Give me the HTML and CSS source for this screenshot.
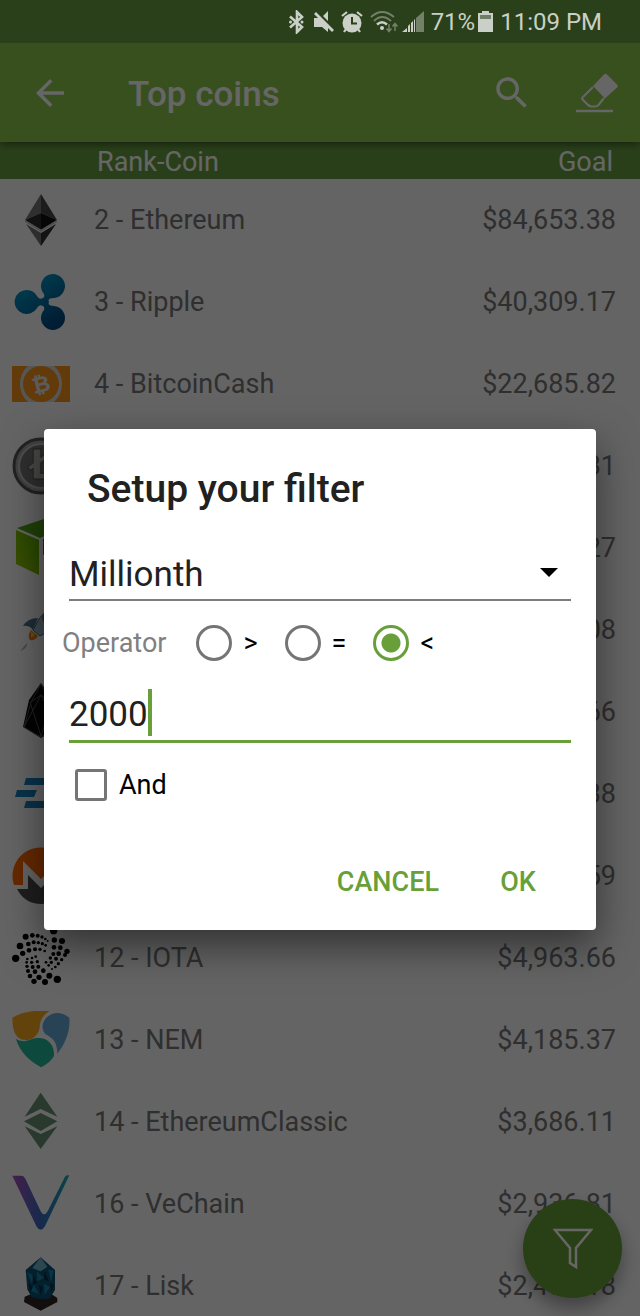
FILE: index.html
```html
<!DOCTYPE html>
<html lang="en">
<head>
  <meta charset="UTF-8">
  <meta name="viewport" content="width=device-width, initial-scale=1.0">
  <title>Top coins</title>
  <link rel="stylesheet" href="styles.css">
</head>
<body>
  <div class="app">
    <div class="status-bar">
      <svg width="18" height="24" viewBox="0 0 18 24"><path d="M1 6.500 13 17 8 22V2l5 5L1 17.500" fill="none" stroke="currentColor" stroke-width="2.600"/><circle cx="1.500" cy="12" r="1.500" fill="currentColor"/><circle cx="13" cy="12" r="1.500" fill="currentColor"/></svg>
      <svg width="20" height="24" viewBox="0 0 20 24"><path d="M0 8h7l7 7v7l-6-5H0zM14 1v10L9 6z" fill="currentColor"/><path d="M1 3l18 18" stroke="currentColor" stroke-width="2.800"/></svg>
      <svg width="22" height="24" viewBox="0 0 22 24"><path d="M1 6l5-4M21 6l-5-4M5 19l-2 3M17 19l2 3" stroke="currentColor" stroke-width="2.200"/><circle cx="11" cy="13" r="9.500" fill="currentColor"/><path d="M11 7v6.500h5" fill="none" stroke="#2a401a" stroke-width="2"/></svg>
      <svg width="54" height="24" viewBox="0 0 54 24">
        <g fill="none" stroke="currentColor" stroke-width="2">
          <path d="M1 7Q12-3 24 7M4 11Q12 3 21 11" opacity=".45"/>
          <path d="M7 14.500Q12 10 17 14.500" stroke-width="2.500"/>
          <path d="M19 14v7M16.500 18.500l2.500 3 2.500-3M25 21v-7M22.500 16.500l2.500-3 2.500 3" opacity=".45" stroke-width="1.500"/>
        </g>
        <circle cx="12" cy="18" r="2" fill="currentColor"/>
        <path d="M32 22l5-4v4zM38 22v-6l2-2v8zM41 22v-9l2-2v11zM44 22V10l1-1v13z" fill="currentColor"/>
        <path d="M46 22V8l8-7v21z" fill="currentColor" opacity=".45"/>
      </svg>
      <span class="battery">71%
        <svg width="15" height="24" viewBox="0 0 15 24"><path d="M0 3h4V1h7v2h4v19H0z" fill="currentColor"/><path d="M2 5h11v4H2z" fill="#6f7f67"/></svg>
      </span>
      <span>11:09 PM</span>
    </div>

    <header class="app-bar">
      <button class="icon-button" aria-label="Back">
        <svg width="42" height="42" viewBox="0 0 24 24"><path d="M20 11H7.830l5.590-5.590L12 4l-8 8 8 8 1.410-1.410L7.830 13H20v-2z" fill="currentColor"/></svg>
      </button>
      <h1>Top coins</h1>
      <button class="icon-button" aria-label="Search">
        <svg width="42" height="42" viewBox="0 0 24 24"><path d="M15.500 14h-.79l-.28-.27C15.410 12.590 16 11.110 16 9.500 16 5.910 13.090 3 9.500 3S3 5.910 3 9.500 5.910 16 9.500 16c1.610 0 3.090-.59 4.230-1.570l.27.28v.79l5 4.990L20.490 19l-4.990-5zm-6 0C7.010 14 5 11.990 5 9.500S7.010 5 9.500 5 14 7.010 14 9.500 11.990 14 9.500 14z" fill="currentColor"/></svg>
      </button>
      <button class="icon-button" aria-label="Clear filter">
        <svg width="42" height="42" viewBox="0 0 42 42"><path d="M17 15 6.500 25.500q-1 1 0 2L12 33q2 1.500 4 1.500h3q2 0 3.500-1.500l5.500-7" fill="none" stroke="currentColor" stroke-width="2.200"/><path d="M17 14 28 2.500q1.500-1.500 3 0L41 12.500q1.500 1.500 0 3L29 26.500z" fill="currentColor"/><path d="M0 39h37" stroke="currentColor" stroke-width="2.500"/></svg>
      </button>
    </header>

    <table class="coins">
      <thead>
        <tr><th colspan="2" class="coin-head">Rank-Coin</th><th class="goal-head">Goal</th></tr>
      </thead>
      <tbody>
        <tr>
          <td class="logo"><svg viewBox="0 0 58 58"><path d="M29 3 13 29l16-7z" fill="#757575"/><path d="M29 3l16 26-16-7z" fill="#464646"/><path d="M13 29l16-7v17z" fill="#2c2c2c"/><path d="M45 29l-16-7v17z" fill="#101010"/><path d="M13 29l16 9.500L45 29v2l-16 10L13 31z" fill="#c0c0c0"/><path d="M14 33l15 9v13z" fill="#727272"/><path d="M44 33l-15 9v13z" fill="#303030"/></svg></td>
          <td>2 - Ethereum</td><td class="goal">$84,653.38</td>
        </tr>
        <tr>
          <td class="logo"><svg viewBox="0 0 58 58"><defs><linearGradient id="ripple" x1="0" y1="0" x2="0.600" y2="1"><stop offset="0.100" stop-color="#00a2d0"/><stop offset="1" stop-color="#00497f"/></linearGradient></defs><path d="M15 17a12 12 0 0 1 10 6q2 4 6 2 2-1 1-4a12 12 0 1 1 10 4q-7 0-5 4-2 4 5 4a12 12 0 1 1-10 4q1-3-1-4-4-2-6 2a12 12 0 1 1-10-18z" fill="url(#ripple)"/></svg></td>
          <td>3 - Ripple</td><td class="goal">$40,309.17</td>
        </tr>
        <tr>
          <td class="logo"><svg viewBox="0 0 58 58"><path d="M0 11h58v36H0z" fill="#f7931a"/><path d="M16 11h26q8 7 8 18t-8 18H16q-8-7-8-18t8-18z" fill="#d8d8d8"/><circle cx="29" cy="29" r="18" fill="#f7931a"/><text x="29" y="37" class="bitcoin-sign" transform="rotate(-14 29 29)">₿</text></svg></td>
          <td>4 - BitcoinCash</td><td class="goal">$22,685.82</td>
        </tr>
        <tr>
          <td class="logo"><svg viewBox="0 0 58 58"><circle cx="29" cy="29" r="27" fill="#a2a2a2" stroke="#555" stroke-width="3"/><circle cx="29" cy="29" r="22" fill="#777" stroke="#c4c4c4" stroke-width="2"/><text x="30" y="42" class="litecoin-sign">Ł</text></svg></td>
          <td>6 - Litecoin</td><td class="goal">$17,402.31</td>
        </tr>
        <tr>
          <td class="logo"><svg viewBox="0 0 58 58"><defs><linearGradient id="neo" x1="1" y1="0" x2="0" y2="1"><stop offset="0" stop-color="#58b400"/><stop offset="1" stop-color="#9bc600"/></linearGradient></defs><path d="M4 11l23 10v35L4 45z" fill="url(#neo)"/><path d="M5 9 32 0l21 8-25 11z" fill="#4ca616"/><path d="M31 20l23-10v17l-23 9z" fill="#388712"/></svg></td>
          <td>7 - NEO</td><td class="goal">$12,968.27</td>
        </tr>
        <tr>
          <td class="logo"><svg viewBox="0 0 58 58"><path d="M11 25q5-8 15-8l-5 12q-4-5-10-4z" fill="#526f86"/><path d="M52 2Q32 4 21 29l7 6Q50 25 52 2z" fill="#9dbccb" stroke="#49667b"/><circle cx="35" cy="17" r="5" fill="#55758b"/><path d="M19 29l7 6q-3 5-8 4-3-4 1-10z" fill="#ef7e18"/><path d="M19 30l4 4-4 3z" fill="#ffc237"/><path d="M8 50l7-8q1 5-7 8z" fill="#b3b3b3"/></svg></td>
          <td>8 - Stellar</td><td class="goal">$10,726.08</td>
        </tr>
        <tr>
          <td class="logo"><svg viewBox="0 0 58 58"><path d="M29 0l12 17 6 27-18 11-18-11 6-27z" fill="#090909"/><path d="M29 1 19 19l10-7 10 7zM19 19l-7 25 17 10 17-10-7-25M12 44l17-32 17 32M18 19l11 34 11-34" fill="none" stroke="#555"/></svg></td>
          <td>9 - EOS</td><td class="goal">$8,314.66</td>
        </tr>
        <tr>
          <td class="logo"><svg viewBox="0 0 58 58"><path d="M14 13h33q10 1 8 9l-4 15q-2 6-9 6H12l2-7h29l4-16H12z" fill="#1681bc"/><path d="M5 25h20l-3 7H3z" fill="#1681bc"/></svg></td>
          <td>10 - Dash</td><td class="goal">$7,015.38</td>
        </tr>
        <tr>
          <td class="logo"><svg viewBox="0 0 58 58"><path d="M2 38A28.500 28.500 0 1 1 56 38H47V14L29 32 11 14v24z" fill="#ff6600"/><path d="M5 42h11V28l13 13 13-13v14h11Q45 57 29 57T5 42z" fill="#4c4c4c"/></svg></td>
          <td>11 - Monero</td><td class="goal">$5,847.59</td>
        </tr>
        <tr>
          <td class="logo">
            <svg viewBox="36 27 174 174">
              <circle cx="47" cy="115" r="11"/><circle cx="60" cy="78" r="10"/><circle cx="77" cy="50" r="9"/><circle cx="97" cy="46" r="7"/><circle cx="113" cy="47" r="6"/><circle cx="126" cy="51" r="5"/><circle cx="136" cy="57" r="4"/><circle cx="143" cy="63" r="3"/>
              <circle cx="68" cy="100" r="8"/><circle cx="85" cy="72" r="7"/><circle cx="101" cy="67" r="6"/><circle cx="115" cy="68" r="5"/><circle cx="127" cy="71" r="5"/><circle cx="137" cy="76" r="4"/>
              <circle cx="87" cy="91" r="7"/><circle cx="105" cy="88" r="6"/><circle cx="120" cy="88" r="5"/><circle cx="134" cy="93" r="4"/>
              <circle cx="161" cy="32" r="11"/><circle cx="186" cy="63" r="9"/><circle cx="201" cy="94" r="8"/><circle cx="163" cy="60" r="8"/><circle cx="181" cy="83" r="7"/><circle cx="195" cy="105" r="6"/>
              <circle cx="162" cy="82" r="7"/><circle cx="176" cy="101" r="7"/><circle cx="185" cy="119" r="5"/><circle cx="160" cy="102" r="6"/><circle cx="168" cy="116" r="6"/><circle cx="175" cy="131" r="5"/><circle cx="151" cy="114" r="5"/><circle cx="154" cy="127" r="5"/><circle cx="138" cy="127" r="4"/><circle cx="166" cy="141" r="4"/><circle cx="146" cy="136" r="4"/><circle cx="156" cy="147" r="3"/>
              <circle cx="172" cy="178" r="11"/><circle cx="148" cy="167" r="9"/><circle cx="130" cy="152" r="7"/><circle cx="115" cy="140" r="6"/><circle cx="112" cy="125" r="5"/><circle cx="107" cy="110" r="4"/>
              <circle cx="135" cy="186" r="9"/><circle cx="117" cy="172" r="8"/><circle cx="105" cy="155" r="7"/><circle cx="98" cy="141" r="6"/><circle cx="95" cy="127" r="5"/><circle cx="96" cy="114" r="4"/>
              <circle cx="102" cy="184" r="8"/><circle cx="90" cy="168" r="7"/><circle cx="84" cy="153" r="6"/><circle cx="81" cy="139" r="5"/><circle cx="80" cy="127" r="4"/><circle cx="82" cy="117" r="4"/>
            </svg>
          </td>
          <td>12 - IOTA</td><td class="goal">$4,963.66</td>
        </tr>
        <tr>
          <td class="logo"><svg viewBox="36 270 174 174"><path d="M37 290Q80 265 150 269C125 285 120 300 119 320 115 345 95 357 78 357 50 357 37 335 37 290z" fill="#f7a920"/><path d="M208 290C190 275 165 270 145 285 125 300 122 325 137 340 155 350 172 360 172 398 195 370 212 330 208 290z" fill="#67a8d8"/><path d="M48 354C75 368 85 356 105 352 140 345 165 370 162 405 150 425 135 432 123 439 90 420 60 395 48 354z" fill="#23b79a"/></svg></td>
          <td>13 - NEM</td><td class="goal">$4,185.37</td>
        </tr>
        <tr>
          <td class="logo"><svg viewBox="36 517 174 174"><path d="M122 516 74 588l48-23 50 23zM72 602l50-25 50 25-50 29zM74 617l48 23 50-23-50 68z" fill="#669073"/></svg></td>
          <td>14 - EthereumClassic</td><td class="goal">$3,686.11</td>
        </tr>
        <tr>
          <td class="logo"><svg viewBox="36 71 174 174"><defs><linearGradient id="vechain"><stop offset="0" stop-color="#a950b8"/><stop offset="0.500" stop-color="#3a68c0"/><stop offset="1" stop-color="#18a9be"/></linearGradient></defs><path d="M37 73H64Q72 73 76 82l46 98q10 18 21 0L195 76q3-5 13-4L135 225q-13 20-25 1z" fill="url(#vechain)"/></svg></td>
          <td>16 - VeChain</td><td class="goal">$2,936.81</td>
        </tr>
        <tr>
          <td class="logo"><svg viewBox="36 319 174 174"><path d="M74 438l20-8h60l18 12v12l-50 26-50-26z" fill="#2b2522"/><path d="M122 320l43 38v60l-15 24q-30 8-56-4l-12-22-5-58z" fill="#0b5272"/><path d="M122 320l20 28-20 14-25-10z" fill="#70b2cb"/><path d="M80 364l20 10-4 24zM110 362l22 20-20 10zM145 356l16 4-8 34zM102 402l14 28-24-10zM132 398l18 12-16 22z" fill="#137fa9"/><path d="M98 370l14 26-12 8zM134 362l12 30-14-6zM86 398l12 10-6 16zM150 398l12 4-8 24zM116 402l12 8-6 24z" fill="#062b42"/></svg></td>
          <td>17 - Lisk</td><td class="goal">$2,452.18</td>
        </tr>
      </tbody>
    </table>

    <button class="fab" aria-label="Filter">
      <svg width="40" height="42" viewBox="0 0 40 42"><path d="M2 2h36L23 20v19l-6-4V20z" fill="none" stroke="currentColor" stroke-width="2.500"/></svg>
    </button>

    <div class="scrim">
      <form class="dialog" role="dialog" aria-labelledby="dialog-title">
        <h2 id="dialog-title">Setup your filter</h2>
        <div class="select">
          <select aria-label="Field">
            <option>Millionth</option>
          </select>
        </div>
        <div class="operators" role="radiogroup" aria-labelledby="operator-label">
          <span class="operator-label" id="operator-label">Operator</span>
          <label><input type="radio" name="operator" value="gt">&gt;</label>
          <label><input type="radio" name="operator" value="eq">=</label>
          <label><input type="radio" name="operator" value="lt" checked>&lt;</label>
        </div>
        <label class="amount">
          <input type="text" inputmode="numeric" aria-label="Value" value="2000">
          <span class="caret"></span>
        </label>
        <label class="and"><input type="checkbox">And</label>
        <div class="actions">
          <button type="button">CANCEL</button>
          <button type="button">OK</button>
        </div>
      </form>
    </div>
  </div>
</body>
</html>
```
FILE: styles.css
```css
* {
  box-sizing: border-box;
}

body {
  margin: 0;
  font-family: Roboto, "Liberation Sans", sans-serif;
  font-size: 27px;
  background: #fafafa;
}

button, input, select {
  font-family: inherit;
}

button {
  border: none;
  background: none;
  padding: 0;
  cursor: pointer;
}

svg {
  display: block;
}

.app {
  position: relative;
  height: 100vh;
  overflow: hidden;
}

/* stays above the scrim */
.status-bar {
  position: relative;
  z-index: 4;
  display: flex;
  justify-content: flex-end;
  align-items: center;
  gap: 7px;
  height: 43px;
  padding-right: 38px;
  background: #2a401a;
  color: #cad0c7;
  font-size: 24px;
}

.battery {
  display: flex;
  align-items: center;
  gap: 3px;
}

.app-bar {
  position: relative;
  z-index: 1;
  display: flex;
  align-items: center;
  height: 99px;
  padding: 0 22px 0 29px;
  background: #8dc54b;
  color: #fff;
  box-shadow: 0 2px 8px rgba(0, 0, 0, 0.5);
}

.app-bar h1 {
  flex: 1;
  margin: 0 0 0 57px;
  padding-top: 3px;
  font-size: 35px;
  font-weight: 500;
}

.icon-button {
  color: #fff;
}

.icon-button + .icon-button {
  margin-left: 43px;
}

.coins {
  width: 100%;
  border-collapse: collapse;
  color: #757575;
}

.coins th {
  height: 37px;
  padding: 3px 0 0;
  background: #689f42;
  color: #fff;
  font-weight: 400;
}

.coins .coin-head {
  padding-left: 97px;
  text-align: left;
}

.coins .goal-head {
  padding-right: 27px;
  text-align: right;
}

.coins td {
  height: 82px;
  padding: 0;
}

.coins .logo {
  width: 94px;
  padding-left: 12px;
}

.logo svg {
  width: 58px;
  height: 58px;
}

.coins .goal {
  padding-right: 24px;
  text-align: right;
}

.bitcoin-sign, .litecoin-sign {
  font-family: "DejaVu Sans", sans-serif;
  font-weight: bold;
  text-anchor: middle;
  fill: #e3e3e3;
}

.bitcoin-sign {
  font-size: 22px;
}

.litecoin-sign {
  font-size: 40px;
  fill: #b5b5b5;
  stroke: #555;
}

.fab {
  position: absolute;
  right: 18px;
  bottom: 18px;
  display: flex;
  justify-content: center;
  align-items: center;
  width: 99px;
  height: 99px;
  border-radius: 50%;
  background: #689f38;
  color: #fff;
  box-shadow: 0 10px 18px rgba(0, 0, 0, 0.35);
}

.scrim {
  position: absolute;
  inset: 43px 0 0;
  z-index: 3;
  display: flex;
  justify-content: center;
  align-items: center;
  padding: 0 44px;
  background: rgba(0, 0, 0, 0.6);
}

.dialog {
  flex: 1;
  padding: 36px 0 12px;
  border-radius: 4px;
  background: #fff;
  box-shadow: 0 16px 40px rgba(0, 0, 0, 0.5);
}

.dialog h2 {
  margin: 0 43px 36px;
  font-size: 39px;
  font-weight: 500;
  line-height: 48px;
  color: #212121;
}

.select {
  position: relative;
  margin: 0 25px 24px;
}

.select::after {
  content: "";
  position: absolute;
  top: 19px;
  right: 13px;
  border: 9px solid transparent;
  border-top-color: #000;
  border-bottom: none;
  pointer-events: none;
}

select {
  display: block;
  width: 100%;
  height: 52px;
  padding: 0;
  border: none;
  border-bottom: 2px solid #7d7d7d;
  border-radius: 0;
  appearance: none;
  background: none;
  color: #212121;
  font-size: 35px;
}

.operators {
  display: flex;
  align-items: center;
  gap: 27px;
  margin: 0 18px 24px;
}

.operator-label {
  margin-right: 3px;
  color: #808080;
}

.operators label {
  display: flex;
  align-items: center;
  gap: 11px;
  color: #000;
}

.operators input {
  width: 36px;
  height: 36px;
  margin: 0;
  border: 3px solid #757575;
  border-radius: 50%;
  appearance: none;
}

.operators input:checked {
  border-color: #689f38;
  background: radial-gradient(circle, #689f38 9px, transparent 10px);
}

.amount {
  display: flex;
  align-items: center;
  height: 58px;
  margin: 0 25px 26px;
  border-bottom: 3px solid #689f38;
}

.amount input {
  width: 4ch;
  padding: 3px 0 0;
  border: none;
  outline: none;
  background: none;
  color: #212121;
  font-size: 35px;
}

.caret {
  width: 4px;
  height: 47px;
  background: #689f38;
}

.and {
  display: flex;
  align-items: center;
  gap: 12px;
  margin: 0 31px;
  color: #000;
}

.and input {
  width: 32px;
  height: 32px;
  margin: 0;
  border: 3px solid #757575;
  border-radius: 3px;
  appearance: none;
}

.actions {
  display: flex;
  justify-content: flex-end;
  gap: 8px;
  margin: 45px 21px 0;
}

.actions button {
  min-width: 114px;
  height: 72px;
  padding: 0 14px;
  color: #689f38;
  font-size: 27px;
  font-weight: 500;
}
```
